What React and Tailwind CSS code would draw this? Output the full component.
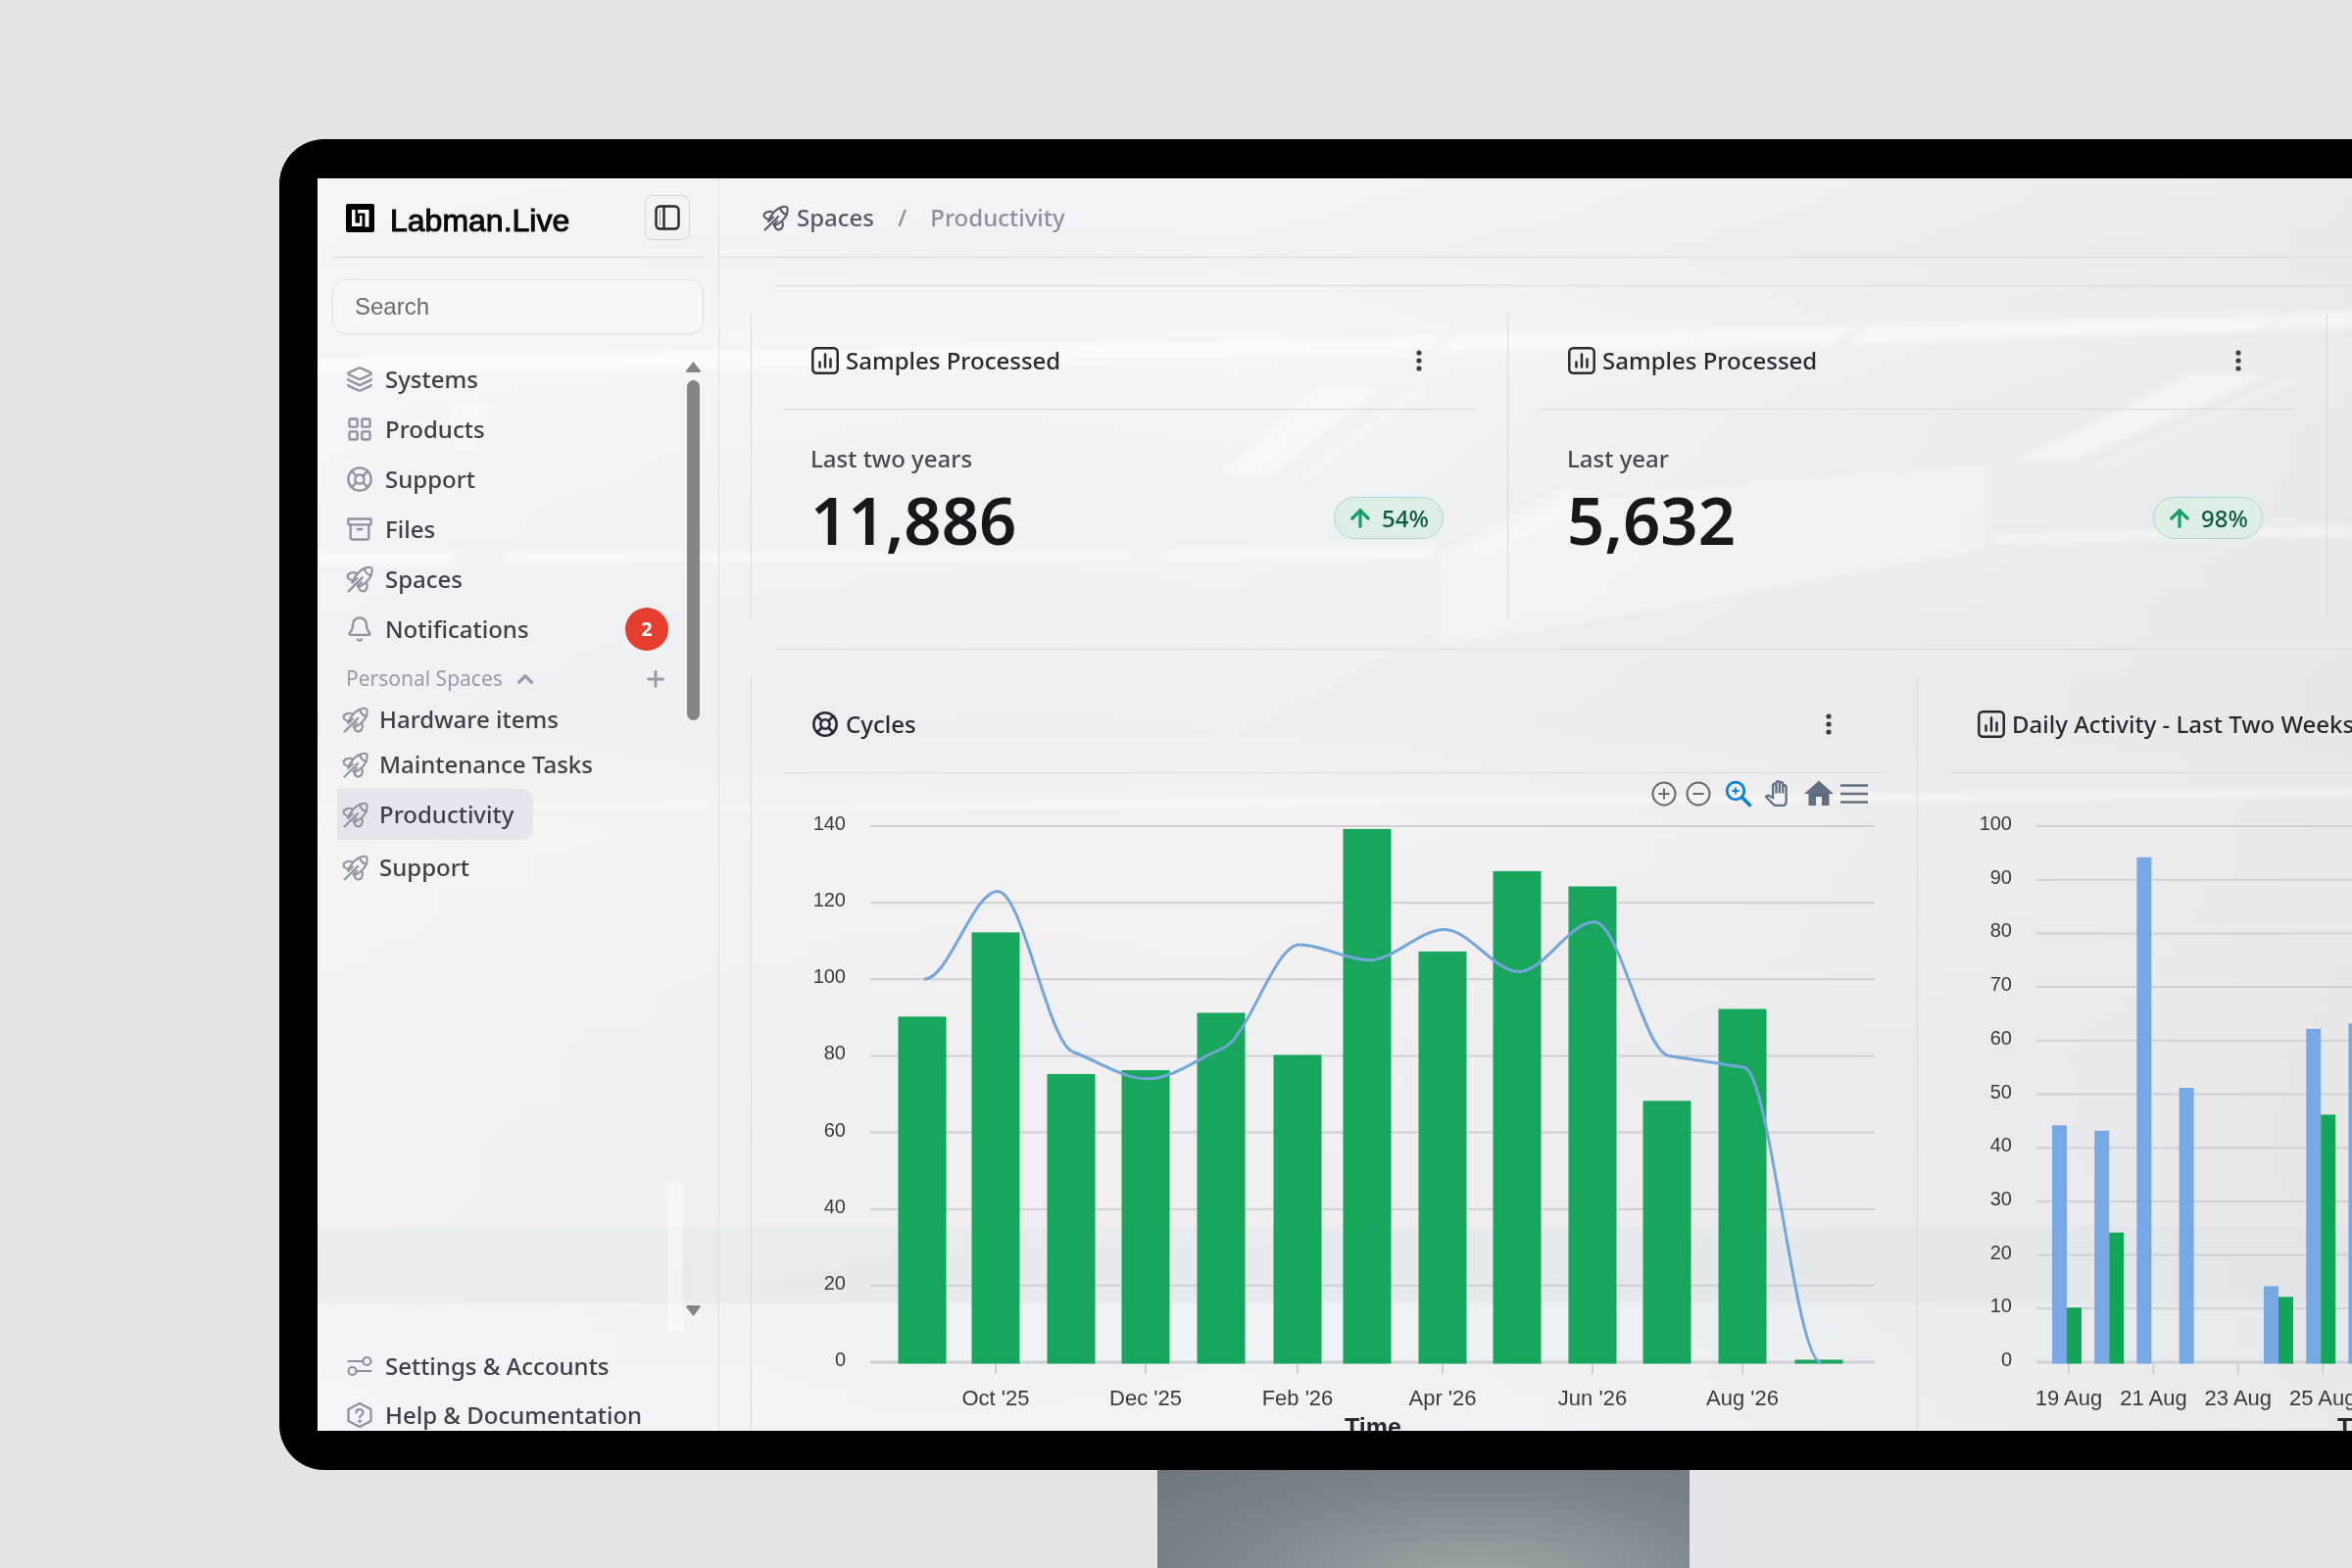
import React, { useState } from 'react';
import { Archive, ArrowUp, Bell, ChevronUp, Layers, LayoutGrid, LifeBuoy, Plus } from 'lucide-react';
import { MdHome, MdOutlinePanTool } from 'react-icons/md';

const RocketIcon = ({ className }) => (
  <svg viewBox="0 0 26 26" fill="none" stroke="currentColor" strokeWidth="2" strokeLinecap="round" strokeLinejoin="round" className={className} aria-hidden="true">
    <path d="M6 15.500C8.500 10 13 3 21 1.700C23 1.400 24.600 2 24.700 4C25 12 18 18 12 20.500" />
    <path d="M17.500 3.500C18.500 6.500 21 9 24 9.500" />
    <path d="M10.500 7.500C7.500 5.500 1.500 7 1.500 10.500C1.500 12.500 3.500 13.500 6.500 14.500" />
    <path d="M19.500 16.500C21 20 19.500 24.500 16 24.500C13.500 24.500 12.500 22.500 12 20.500" />
    <path d="M15.500 11.500L2.500 24.500" />
    <path d="M10.500 12L6 16.500M14.500 16L11 19.500" />
  </svg>
);

const ChartIcon = ({ className }) => (
  <svg viewBox="0 0 28 28" fill="none" stroke="currentColor" strokeWidth="2.500" strokeLinecap="round" className={className} aria-hidden="true">
    <rect x="1.300" y="1.300" width="25.400" height="25.400" rx="4" />
    <path d="M8.500 15.500V20.500M14 7.500V20.500M19.500 12.500V20.500" />
  </svg>
);

const SlidersIcon = ({ className }) => (
  <svg viewBox="0 0 26 26" fill="none" stroke="currentColor" strokeWidth="2.200" strokeLinecap="round" className={className} aria-hidden="true">
    <path d="M1.500 8H16M10 18H24.500" />
    <circle cx="20.500" cy="8" r="4" />
    <circle cx="5.500" cy="18" r="4" />
  </svg>
);

const HelpIcon = ({ className }) => (
  <svg viewBox="0 0 26 26" fill="none" stroke="currentColor" strokeWidth="2.200" strokeLinecap="round" strokeLinejoin="round" className={className} aria-hidden="true">
    <path d="M13 1L24.500 7V19L13 25L1.500 19V7Z" />
    <path d="M9.500 10.500C9.500 6 16.500 6 16.500 10.300C16.500 13 13 13 13 15.500" />
    <circle cx="13" cy="19.300" r="0.700" fill="currentColor" />
  </svg>
);

const LogoIcon = () => (
  <svg viewBox="0 0 29 29" className="size-[29px] shrink-0" aria-hidden="true">
    <rect width="29" height="29" rx="2" fill="#000" />
    <path d="M6 6H9.500V19.500H14V12H16.500V23H6Z" fill="#fff" />
    <path d="M12 6H23.500V23.500H19.500V9.500H12Z" fill="#fff" />
  </svg>
);

const PanelIcon = () => (
  <svg viewBox="0 0 26 26" fill="none" stroke="currentColor" strokeWidth="2.400" className="size-[26px]" aria-hidden="true">
    <rect x="1.500" y="1.500" width="23" height="23" rx="4" />
    <path d="M9.500 1.500V24.500" />
    <path d="M5.500 5V21" strokeWidth="1" opacity="0.400" />
  </svg>
);

const mainLinks = [
  { label: 'Systems', Icon: Layers },
  { label: 'Products', Icon: LayoutGrid },
  { label: 'Support', Icon: LifeBuoy },
  { label: 'Files', Icon: Archive },
  { label: 'Spaces', Icon: RocketIcon },
  { label: 'Notifications', Icon: Bell, count: 2 },
];

const personalSpaces = [
  { label: 'Hardware items', rowClass: 'h-[46px]' },
  { label: 'Maintenance Tasks', rowClass: 'h-[46px]' },
  { label: 'Productivity', rowClass: 'my-[2px] h-[52px] rounded-r-xl bg-[#dcdce6]/60' },
  { label: 'Support', rowClass: 'h-[52px]' },
];

const footerLinks = [
  { label: 'Settings & Accounts', Icon: SlidersIcon },
  { label: 'Help & Documentation', Icon: HelpIcon },
];

const cycles = [
  { x: 142, bar: 90, line: 100 },
  { x: 217, bar: 112, line: 123 },
  { x: 294, bar: 75, line: 81 },
  { x: 370, bar: 76, line: 74 },
  { x: 447, bar: 91, line: 82 },
  { x: 525, bar: 80, line: 109 },
  { x: 596, bar: 139, line: 105 },
  { x: 673, bar: 107, line: 113 },
  { x: 749, bar: 128, line: 102 },
  { x: 826, bar: 124, line: 115 },
  { x: 902, bar: 68, line: 80 },
  { x: 979, bar: 92, line: 77 },
  { x: 1057, bar: 0.4, line: 0 },
];

const cycleTicks = [
  { x: 217, label: "Oct '25" },
  { x: 370, label: "Dec '25" },
  { x: 525, label: "Feb '26" },
  { x: 673, label: "Apr '26" },
  { x: 826, label: "Jun '26" },
  { x: 979, label: "Aug '26" },
];

// One entry per day, starting 19 Aug
const activity = [
  [44, 10], [43, 24], [94, 0], [51, 0], [0, 0], [14, 12], [62, 46], [63, 20], [58, 31], [71, 40], [36, 12],
];

const DAY_WIDTH = 43.2;

const activityTicks = [19, 21, 23, 25].map((day) => ({
  x: 122 + (day - 19) * DAY_WIDTH,
  label: `${day} Aug`,
}));

const AXIS_Y = 560;
const PLOT_HEIGHT = 547;
const yAt = (value, max) => AXIS_Y - (value / max) * PLOT_HEIGHT;

// Monotone cubic through the points, flat at both ends
const smoothPath = (points) => {
  const slopes = points.slice(1).map((p, i) => (p[1] - points[i][1]) / (p[0] - points[i][0]));
  const tangents = points.map((_, i) => {
    if (i === 0 || i === points.length - 1) return 0;
    const a = slopes[i - 1];
    const b = slopes[i];
    if (a * b <= 0) return 0;
    return Math.sign(a) * Math.min(Math.abs(a), Math.abs(b), Math.abs(a + b) / 4);
  });
  return points.slice(1).reduce((d, [x, y], i) => {
    const [px, py] = points[i];
    const h = (x - px) / 3;
    return `${d}C${px + h},${py + h * tangents[i]} ${x - h},${y - h * tangents[i + 1]} ${x},${y}`;
  }, `M${points[0][0]},${points[0][1]}`);
};

const Chart = ({ title, max, step, ticks, timeX, children, className }) => {
  const rows = Array.from({ length: max / step + 1 }, (_, i) => i * step);
  return (
    <svg viewBox="0 0 1125 680" className={className} role="img" aria-label={title}>
      {rows.map((value) => (
        <g key={value}>
          <line x1="89" x2="1114" y1={yAt(value, max)} y2={yAt(value, max)} stroke="#cfcfd4" strokeWidth={value === 0 ? 3 : 2} />
          <text x="64" y={yAt(value, max) + 4} textAnchor="end" fontSize="20" fill="#373d3f">{value}</text>
        </g>
      ))}
      {ticks.map((tick) => (
        <g key={tick.label}>
          <line x1={tick.x} x2={tick.x} y1="562" y2="572" stroke="#cfcfd4" strokeWidth="2" />
          <text x={tick.x} y="604" textAnchor="middle" fontSize="22" fill="#373d3f">{tick.label}</text>
        </g>
      ))}
      {children}
      <text x={timeX} y="635" textAnchor="middle" fontSize="25" fontWeight="700" fill="#26292e">Time</text>
    </svg>
  );
};

const CyclesChart = () => (
  <Chart title="Cycles" max={140} step={20} ticks={cycleTicks} timeX={602} className="block w-full overflow-visible">
    {cycles.map(({ x, bar }) => (
      <rect key={x} x={x - 24.5} y={yAt(bar, 140) - 1} width="49" height={AXIS_Y - yAt(bar, 140) + 2.5} fill="#18a65c" />
    ))}
    <path d={smoothPath(cycles.map(({ x, line }) => [x + 2, yAt(line, 140)]))} fill="none" stroke="#74a6dc" strokeWidth="3" />
  </Chart>
);

const ActivityChart = () => (
  <Chart title="Daily Activity" max={100} step={10} ticks={activityTicks} timeX={425} className="block w-[1125px] max-w-none overflow-visible">
    {activity.map(([blue, green], i) => (
      <g key={i}>
        {blue > 0 && <rect x={105 + i * DAY_WIDTH} y={yAt(blue, 100) - 1} width="15" height={AXIS_Y - yAt(blue, 100) + 2.5} fill="#78a8e4" />}
        {green > 0 && <rect x={120 + i * DAY_WIDTH} y={yAt(green, 100) - 1} width="15" height={AXIS_Y - yAt(green, 100) + 2.5} fill="#12a659" />}
      </g>
    ))}
  </Chart>
);

const ChartToolbar = () => (
  <div className="flex h-[41px] items-center justify-end pr-[18px] text-[#5f6f80]">
    <button type="button" aria-label="Zoom in" className="mr-[9px]">
      <svg viewBox="0 0 26 26" fill="none" stroke="#66696e" strokeWidth="2" className="size-[26px]">
        <circle cx="13" cy="13" r="11.500" />
        <path d="M13 7.500V18.500M7.500 13H18.500" />
      </svg>
    </button>
    <button type="button" aria-label="Zoom out" className="mr-[14px]">
      <svg viewBox="0 0 26 26" fill="none" stroke="#66696e" strokeWidth="2" className="size-[26px]">
        <circle cx="13" cy="13" r="11.500" />
        <path d="M7.500 13H18.500" />
      </svg>
    </button>
    <button type="button" aria-label="Selection zoom" className="mr-[11px]">
      <svg viewBox="0 0 28 28" fill="none" stroke="#0b80d0" className="size-[28px]">
        <circle cx="11" cy="11" r="8.800" strokeWidth="2.800" />
        <path d="M11 7.500V14.500M7.500 11H14.500" strokeWidth="1.800" />
        <path d="M17.500 17.500L26.500 26.500" strokeWidth="3.500" />
      </svg>
    </button>
    <button type="button" aria-label="Panning" className="mr-[15px]"><MdOutlinePanTool className="size-[27px]" /></button>
    <button type="button" aria-label="Reset zoom" className="mr-[7px]"><MdHome className="-m-[3px] size-[36px]" /></button>
    <button type="button" aria-label="Menu">
      <svg viewBox="0 0 28 20" stroke="currentColor" strokeWidth="2.600" className="h-[20px] w-[28px]">
        <path d="M0 1.500H28M0 10H28M0 18.500H28" />
      </svg>
    </button>
  </div>
);

const CardHeader = ({ title, Icon }) => (
  <header className="flex h-[98px] items-center gap-[7px] border-b border-[#d8dadd] pb-[2px] pl-[29px] pr-[42px] text-[#262a31]">
    <Icon className="size-[28px] shrink-0" strokeWidth={2.2} />
    <h2 className="whitespace-nowrap text-[24px] font-medium">{title}</h2>
    <button type="button" aria-label={`${title} options`} className="ml-auto flex w-8 justify-center">
      <svg viewBox="0 0 6 22" fill="#3a3d42" className="h-[22px] w-[6px]">
        <circle cx="3" cy="3" r="2.600" />
        <circle cx="3" cy="11" r="2.600" />
        <circle cx="3" cy="19" r="2.600" />
      </svg>
    </button>
  </header>
);

const StatCard = ({ period, value, change }) => (
  <article className="border-l border-[#d8dadd] px-8">
    <CardHeader title="Samples Processed" Icon={ChartIcon} />
    <div className="flex items-end justify-between pl-[28px] pr-[33px] pt-[36px]">
      <div>
        <p className="text-[24px] font-medium leading-[28px] text-[#474b51]">{period}</p>
        <p className="mt-[14px] text-[67px] font-semibold leading-[68px] text-[#15181d]">{value}</p>
      </div>
      <span className="mb-[14px] flex h-[43px] items-center gap-[8px] rounded-full border border-[#a9d9c1] bg-[#dceee6] pl-[12px] pr-[14px] text-[24px] font-medium text-[#0f5a38]">
        <ArrowUp className="size-[28px] text-[#12a063]" strokeWidth={2.8} />
        {change}
      </span>
    </div>
  </article>
);

// Light from the windows falling across the glass
const Reflections = () => (
  <svg viewBox="0 0 2076 1279" preserveAspectRatio="none" className="pointer-events-none absolute inset-0 size-full" aria-hidden="true">
    <defs>
      <linearGradient id="shade" x1="0" x2="1" y1="0" y2="0">
        <stop offset="0" stopColor="#ffffff" stopOpacity="0.150" />
        <stop offset="0.450" stopColor="#dfe3e8" stopOpacity="0" />
        <stop offset="1" stopColor="#dcdedf" stopOpacity="0.450" />
      </linearGradient>
      <filter id="soft" x="-5%" y="-50%" width="110%" height="200%">
        <feGaussianBlur stdDeviation="3" />
      </filter>
    </defs>
    <rect width="2076" height="1279" fill="url(#shade)" />
    <g fill="#ffffff" filter="url(#soft)">
      <path d="M0 184L409 176V194L0 200Z" opacity="0.600" />
      <path d="M409 176L1150 160L1130 178L409 196Z" opacity="0.500" />
      <path d="M1160 160L1570 152L1545 170L1140 178Z" opacity="0.500" />
      <path d="M1585 150L2005 138L1985 156L1560 169Z" opacity="0.500" />
      <path d="M2010 138L2076 134V154L1992 156Z" opacity="0.500" />
      <path d="M1020 214L1085 214L975 302L920 302Z" opacity="0.450" />
      <path d="M1120 214L1135 214L1010 308L995 308Z" opacity="0.300" />
      <path d="M1910 200L1995 200L1790 290L1730 290Z" opacity="0.400" />
      <path d="M2010 204L2030 204L1820 298L1805 298Z" opacity="0.300" />
      <path d="M0 382L140 382V394L0 394Z" opacity="0.600" />
      <path d="M190 382L830 379V390L190 394Z" opacity="0.450" />
      <path d="M860 379L1140 374V388L860 391Z" opacity="0.500" />
      <path d="M1710 362L2076 354V366L1710 374Z" opacity="0.400" />
      <path d="M135 230L180 230L160 280L140 280Z" opacity="0.350" />
      <path d="M120 300L205 300V370L120 370Z" opacity="0.150" />
      <path d="M1145 384L1280 310V345L1145 408Z" opacity="0.300" />
      <path d="M1275 330L1705 290V380L1145 478V412Z" opacity="0.250" />
      <path d="M0 639L400 637V642L0 642Z" opacity="0.700" />
      <path d="M409 640L1700 628L2076 624V630L1700 634L409 645Z" opacity="0.600" />
    </g>
    <rect x="357" y="1023" width="16" height="155" fill="#ffffff" opacity="0.400" />
  </svg>
);

const Sidebar = ({ query, onQueryChange }) => (
  <aside className="relative flex w-[410px] shrink-0 flex-col border-r border-[#dfe1e5] px-[15px] text-[24px] font-medium text-[#3d4249]">
    <div className="flex h-[81px] shrink-0 items-center border-b border-[#d8dadd] pl-[14px] pr-[14px]">
      <LogoIcon />
      <span className="ml-[16px] pt-[6px] font-['Liberation_Sans',sans-serif] text-[32px] leading-none text-[#0a0a0b] [-webkit-text-stroke:1px_#0a0a0b]">Labman.Live</span>
      <button type="button" aria-label="Toggle sidebar" className="ml-auto flex size-[46px] items-center justify-center rounded-lg border border-[#d2d4d8] text-[#24272e]">
        <PanelIcon />
      </button>
    </div>

    <input
      type="search"
      aria-label="Search"
      placeholder="Search"
      value={query}
      onChange={(e) => onQueryChange(e.target.value)}
      className="mt-[22px] h-[56px] shrink-0 rounded-[14px] border border-[#dcdee2] bg-white/25 px-[22px] font-['Liberation_Sans',sans-serif] text-[24px] font-normal outline-none placeholder:text-[#66696e]"
    />

    <div className="mb-[26px] mt-[20px] flex min-h-0 flex-1">
      <nav className="min-w-0 flex-1">
        {mainLinks.map(({ label, Icon, count }) => (
          <a key={label} href="#" className="flex h-[51px] items-center pl-[14px] pr-[18px]">
            <Icon className="size-[28px] shrink-0 text-[#8d939e]" strokeWidth={2} />
            <span className="ml-[12px]">{label}</span>
            {count && (
              <span className="ml-auto flex size-[44px] items-center justify-center rounded-full bg-[#e53e2f] text-[20px] font-bold text-white">{count}</span>
            )}
          </a>
        ))}
        <div className="flex h-[52px] items-center pl-[14px] pr-[18px] text-[21px] font-normal text-[#979ca6]">
          Personal Spaces
          <ChevronUp className="ml-[10px] size-[26px]" strokeWidth={3} />
          <button type="button" aria-label="Add space" className="ml-auto"><Plus className="size-[26px]" strokeWidth={2.6} /></button>
        </div>
        <div className="-mt-2 flex flex-col items-start">
          {personalSpaces.map(({ label, rowClass }) => (
            <a key={label} href="#" className={`ml-[5px] flex items-center gap-[11px] pl-[5px] pr-[20px] ${rowClass}`}>
              <RocketIcon className="size-[27px] shrink-0 text-[#8d939e]" />
              {label}
            </a>
          ))}
        </div>
      </nav>
      <div className="mr-[3px] flex w-[15px] flex-col items-center gap-2 pt-2 text-[#858587]">
        <svg viewBox="0 0 15 11" fill="currentColor" className="h-[11px] w-[15px]"><path d="M7.500 0L15 9.500Q15 11 13 11H2Q0 11 0 9.500Z" /></svg>
        <div className="h-[347px] w-[13px] rounded-full bg-[#858587]" />
        <svg viewBox="0 0 15 11" fill="currentColor" className="mt-auto h-[11px] w-[15px]"><path d="M7.500 11L15 1.500Q15 0 13 0H2Q0 0 0 1.500Z" /></svg>
      </div>
    </div>

    <div className="-mb-[9px] shrink-0">
      {footerLinks.map(({ label, Icon }) => (
        <a key={label} href="#" className="flex h-[50px] items-center gap-[13px] pl-[15px]">
          <Icon className="size-[26px] shrink-0 text-[#8d939e]" />
          {label}
        </a>
      ))}
    </div>
  </aside>
);

const App = () => {
  const [query, setQuery] = useState('');

  return (
    <div className="flex h-screen flex-col overflow-hidden bg-[#e4e3e8] pl-[285px] pt-[142px] font-['Noto_Sans',sans-serif]">
      <div className="min-h-0 flex-1 rounded-l-[46px] bg-black py-[40px] pl-[39px]">
        <div className="relative flex h-full overflow-hidden bg-[linear-gradient(#f4f4f6_0,#f0f2f5_6%,#f3f5f7_14%,#f1f3f6_18%,#edeff2_44%,#f2eff1_46%,#f4f1f2_52%,#f0eff1_70%,#f1eef0_83.5%,#e7ebee_84%,#e6eaed_89.5%,#eff3f6_90%,#f1f3f7_100%)]">
          <Reflections />
          <Sidebar query={query} onQueryChange={setQuery} />

          <main className="relative flex min-w-0 flex-1 flex-col">
            <nav aria-label="Breadcrumb" className="flex h-[81px] shrink-0 items-center border-b border-[#d8dadd] pl-[44px] text-[24px] font-medium text-[#555a62]">
              <RocketIcon className="size-[27px]" />
              <a href="#" className="ml-[8px]">Spaces</a>
              <span className="mx-[24px] text-[#8b9099]">/</span>
              <span className="text-[#8b919c]">Productivity</span>
            </nav>

            <div className="pl-[32px]">
              <hr className="ml-[25px] mt-[28px] border-[#d8dadd]" />
              <section className="mt-[28px] grid h-[312px] grid-cols-[772fr_836fr_26fr]">
                <StatCard period="Last two years" value="11,886" change="54%" />
                <StatCard period="Last year" value="5,632" change="98%" />
                <div className="border-l border-[#d8dadd]" />
              </section>
              <hr className="ml-[25px] mt-[30px] border-[#d8dadd]" />
              <section className="mt-[28px] grid grid-cols-[1190fr_444fr]">
                <article className="border-l border-[#d8dadd] px-8">
                  <CardHeader title="Cycles" Icon={LifeBuoy} />
                  <ChartToolbar />
                  <div className="font-['Liberation_Sans',sans-serif]"><CyclesChart /></div>
                </article>
                <article className="min-w-0 border-l border-[#d8dadd] pl-8">
                  <div className="w-[1125px]">
                    <CardHeader title="Daily Activity - Last Two Weeks" Icon={ChartIcon} />
                    <ChartToolbar />
                    <div className="font-['Liberation_Sans',sans-serif]"><ActivityChart /></div>
                  </div>
                </article>
              </section>
            </div>
          </main>
        </div>
      </div>
      <div className="ml-[896px] h-[100px] w-[543px] shrink-0 bg-[radial-gradient(ellipse_at_60%_120%,#a3a7a8,#7d858a_60%,#6d767b)]" />
    </div>
  );
};

export default App;
